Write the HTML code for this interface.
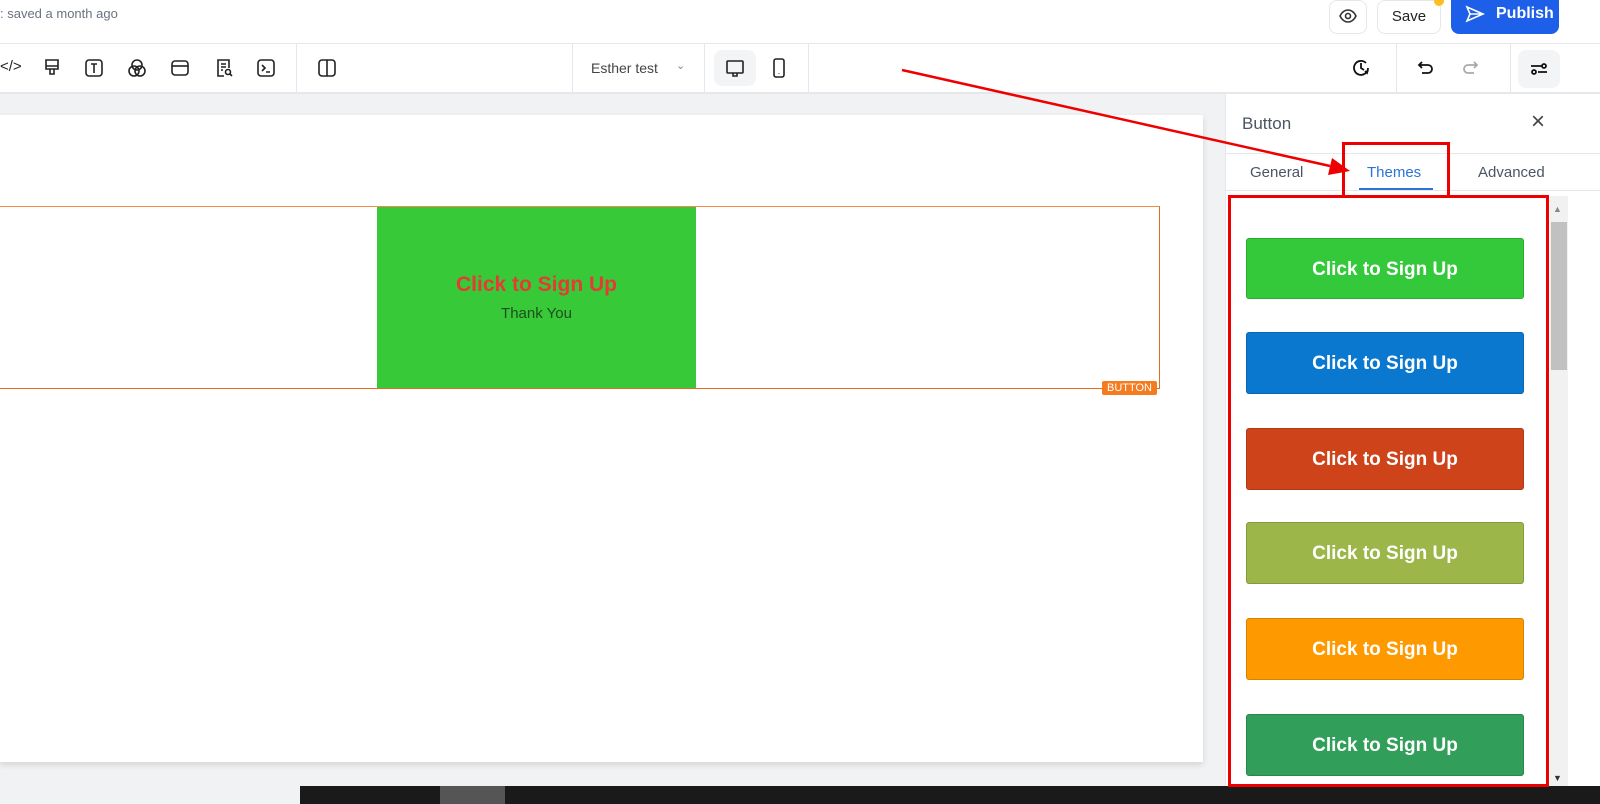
<!DOCTYPE html>
<html><head><style>
*{box-sizing:border-box;margin:0;padding:0}
body{width:1600px;height:804px;overflow:hidden;background:#fff;font-family:"Liberation Sans",sans-serif;position:relative}
.abs{position:absolute}
.ic{position:absolute;width:20px;height:20px}
.tb{position:absolute;left:1246px;width:278px;height:62px;border-radius:3px;color:#fff;font-weight:bold;font-size:19px;text-align:center;line-height:62px;border:1px solid rgba(0,0,0,.15)}
</style></head><body>
<div class="abs" style="left:0;top:6px;font-size:13px;color:#6b7280">: saved a month ago</div>
<div class="abs" style="left:1329px;top:0;width:38px;height:34px;border:1px solid #e5e7eb;border-radius:8px"></div>
<svg class="ic" style="left:1338px;top:6px" viewBox="0 0 20 20" fill="none" stroke="#333" stroke-width="1.6"><path d="M2 10c2-4 5-6 8-6s6 2 8 6c-2 4-5 6-8 6s-6-2-8-6z"/><circle cx="10" cy="10" r="2.5"/></svg>
<div class="abs" style="left:1377px;top:0;width:64px;height:34px;border:1px solid #e5e7eb;border-radius:8px;font-size:15px;line-height:32px;text-align:center;color:#222">Save</div>
<div class="abs" style="left:1434px;top:-4px;width:10px;height:10px;border-radius:50%;background:#fbbf24"></div>
<div class="abs" style="left:1451px;top:0;width:108px;height:34px;background:#1d5fe8;border-radius:0 0 8px 8px;color:#fff;font-weight:bold;font-size:16px;line-height:28px;padding-left:45px">Publish</div>
<svg class="ic" style="left:1465px;top:4px" viewBox="0 0 20 20" fill="none" stroke="#fff" stroke-width="1.6"><path d="M2 3l16 7-16 7 3-7zM5 10h13"/></svg>
<div class="abs" style="left:0;top:43px;width:1600px;height:1px;background:#e5e7eb"></div>
<div class="abs" style="left:0;top:92px;width:1600px;height:2px;background:#e5e7eb"></div>
<div class="abs" style="left:0;top:58px;font-size:15px;color:#222">&lt;/&gt;</div>
<svg class="ic" style="left:42px;top:58px" viewBox="0 0 20 20" fill="none" stroke="#222" stroke-width="1.6"><path d="M4 2h12v9H4zM4 8h12M8 11v5h4v-5"/></svg>
<svg class="ic" style="left:84px;top:58px" viewBox="0 0 20 20" fill="none" stroke="#222" stroke-width="1.6"><rect x="2" y="2" width="16" height="16" rx="3"/><path d="M7 6h6M10 6v9"/></svg>
<svg class="ic" style="left:127px;top:58px" viewBox="0 0 20 20" fill="none" stroke="#222" stroke-width="1.6"><circle cx="10" cy="7" r="5"/><circle cx="7" cy="13" r="5"/><circle cx="13" cy="13" r="5"/></svg>
<svg class="ic" style="left:170px;top:58px" viewBox="0 0 20 20" fill="none" stroke="#222" stroke-width="1.6"><rect x="2" y="3" width="16" height="14" rx="3"/><path d="M2 8h16"/></svg>
<svg class="ic" style="left:214px;top:58px" viewBox="0 0 20 20" fill="none" stroke="#222" stroke-width="1.6"><path d="M10 18H4V2h11v8M7 6h5M7 9h5M7 12h2"/><circle cx="14" cy="14" r="2.5"/><path d="M16 16l2 2"/></svg>
<svg class="ic" style="left:256px;top:58px" viewBox="0 0 20 20" fill="none" stroke="#222" stroke-width="1.6"><rect x="2" y="2" width="16" height="16" rx="3"/><path d="M6 7l3 3-3 3M10 14h4"/></svg>
<div class="abs" style="left:296px;top:44px;width:1px;height:48px;background:#e5e7eb"></div>
<svg class="ic" style="left:317px;top:58px" viewBox="0 0 20 20" fill="none" stroke="#222" stroke-width="1.6"><rect x="2" y="2" width="16" height="16" rx="3"/><path d="M10 2v16"/></svg>
<div class="abs" style="left:572px;top:44px;width:1px;height:48px;background:#e5e7eb"></div>
<div class="abs" style="left:591px;top:60px;font-size:14px;color:#444">Esther test</div>
<div class="abs" style="left:676px;top:59px;font-size:11px;color:#888">&#8964;</div>
<div class="abs" style="left:704px;top:44px;width:1px;height:48px;background:#e5e7eb"></div>
<div class="abs" style="left:714px;top:50px;width:42px;height:36px;background:#f3f4f6;border-radius:8px"></div>
<svg class="ic" style="left:725px;top:58px" viewBox="0 0 20 20" fill="none" stroke="#222" stroke-width="1.6"><rect x="2" y="3" width="16" height="12" rx="1"/><path d="M8 15v3h4v-3"/></svg>
<svg class="ic" style="left:769px;top:58px" viewBox="0 0 20 20" fill="none" stroke="#222" stroke-width="1.6"><rect x="5" y="1" width="10" height="18" rx="2"/><path d="M10 15v.5"/></svg>
<div class="abs" style="left:808px;top:44px;width:1px;height:48px;background:#e5e7eb"></div>
<svg class="ic" style="left:1351px;top:58px" viewBox="0 0 20 20" fill="none" stroke="#111" stroke-width="1.8"><path d="M17 10a7 7 0 1 1-2-5M10 5v5l3 2M17 12l-1 3-2-2"/></svg>
<div class="abs" style="left:1396px;top:44px;width:1px;height:48px;background:#e5e7eb"></div>
<svg class="ic" style="left:1416px;top:58px" viewBox="0 0 20 20" fill="none" stroke="#111" stroke-width="1.8"><path d="M6 4L3 7l3 3M3 7h9a4 4 0 0 1 0 8H6"/></svg>
<svg class="ic" style="left:1460px;top:58px" viewBox="0 0 20 20" fill="none" stroke="#aaa" stroke-width="1.8"><path d="M14 4l3 3-3 3M17 7H8a4 4 0 0 0 0 8h6"/></svg>
<div class="abs" style="left:1510px;top:44px;width:1px;height:48px;background:#e5e7eb"></div>
<div class="abs" style="left:1518px;top:50px;width:42px;height:38px;background:#f3f4f6;border-radius:8px"></div>
<svg class="ic" style="left:1529px;top:59px" viewBox="0 0 20 20" fill="none" stroke="#111" stroke-width="1.8"><path d="M2 7h12M9 13h9"/><circle cx="15" cy="7" r="2"/><circle cx="5" cy="13" r="2"/></svg>
<!-- canvas -->
<div class="abs" style="left:0;top:94px;width:1225px;height:693px;background:#f1f2f4"></div>
<div class="abs" style="left:0;top:115px;width:1203px;height:647px;background:#fff;box-shadow:0 3px 6px rgba(0,0,0,.12)"></div>
<div class="abs" style="left:-1px;top:206px;width:1161px;height:183px;border:1px solid #f08a4b;border-bottom-color:#e26b1c;border-right-color:#e26b1c"></div>
<div class="abs" style="left:377px;top:207px;width:319px;height:181px;background:#37c937"></div>
<div class="abs" style="left:377px;top:273px;width:319px;text-align:center;color:#e53b34;font-weight:bold;font-size:21px">Click to Sign Up</div>
<div class="abs" style="left:377px;top:305px;width:319px;text-align:center;color:#1f4d1f;font-size:15px">Thank You</div>
<div class="abs" style="left:1102px;top:381px;width:55px;height:14px;background:#f47b20;color:#fff;font-size:11px;line-height:14px;text-align:center;border-radius:2px">BUTTON</div>
<div class="abs" style="left:0;top:787px;width:1600px;height:17px;background:#f1f2f4"></div>
<div class="abs" style="left:300px;top:786px;width:1300px;height:18px;background:#1a1a1a"></div>
<div class="abs" style="left:440px;top:786px;width:65px;height:18px;background:#555"></div>
<!-- panel -->
<div class="abs" style="left:1225px;top:94px;width:375px;height:692px;background:#fff;border-left:1px solid #e5e7eb"></div>
<div class="abs" style="left:1242px;top:114px;font-size:17px;color:#4b5563">Button</div>
<div class="abs" style="left:1531px;top:108px;font-size:24px;color:#444">&#215;</div>
<div class="abs" style="left:1225px;top:153px;width:375px;height:1px;background:#e5e7eb"></div>
<div class="abs" style="left:1225px;top:190px;width:375px;height:1px;background:#e5e7eb"></div>
<div class="abs" style="left:1250px;top:164px;font-size:15px;color:#4b5563">General</div>
<div class="abs" style="left:1367px;top:164px;font-size:15px;color:#2b73d8">Themes</div>
<div class="abs" style="left:1359px;top:188px;width:74px;height:2px;background:#2b73d8"></div>
<div class="abs" style="left:1478px;top:164px;font-size:15px;color:#4b5563">Advanced</div>
<div class="abs" style="left:1342px;top:142px;width:108px;height:56px;border:3px solid #e00"></div>
<div class="abs" style="left:1550px;top:196px;width:18px;height:590px;background:#f1f1f1"></div>
<div class="abs" style="left:1551px;top:222px;width:16px;height:148px;background:#c1c1c1"></div>
<div class="abs" style="left:1553px;top:204px;font-size:9px;color:#888">&#9650;</div>
<div class="abs" style="left:1553px;top:773px;font-size:9px;color:#333">&#9660;</div>
<div class="tb" style="top:238px;background:#34c93a;height:61px;line-height:61px">Click to Sign Up</div>
<div class="tb" style="top:332px;background:#0b78cf">Click to Sign Up</div>
<div class="tb" style="top:428px;background:#cf431b">Click to Sign Up</div>
<div class="tb" style="top:522px;background:#9cb64a">Click to Sign Up</div>
<div class="tb" style="top:618px;background:#ff9900">Click to Sign Up</div>
<div class="tb" style="top:714px;background:#319e5a">Click to Sign Up</div>
<div class="abs" style="left:1228px;top:195px;width:321px;height:592px;border:3px solid #e00"></div>
<svg class="abs" style="left:0;top:0" width="1600" height="804"><line x1="902" y1="70" x2="1330" y2="166" stroke="#e00" stroke-width="2.5"/><polygon points="1350,171 1328,175 1332,158" fill="#e00"/></svg>
</body></html>
